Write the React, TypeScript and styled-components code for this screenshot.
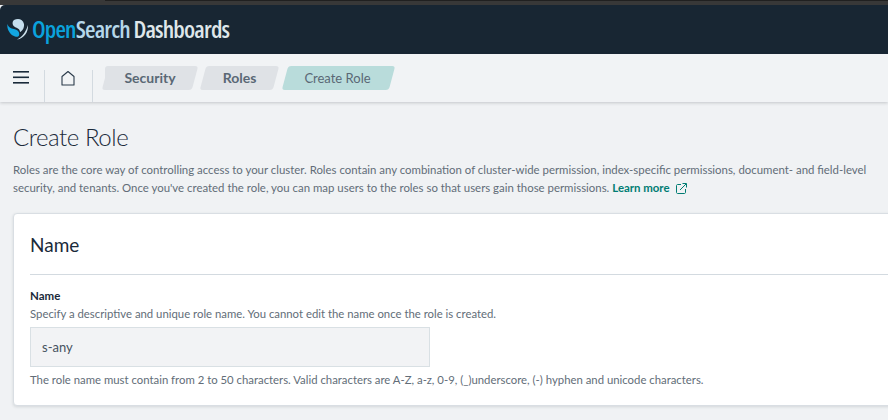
import React from "react";
import styled, { createGlobalStyle } from "styled-components";

const Global = createGlobalStyle`
  html, body { margin: 0; padding: 0; width: 888px; height: 420px; overflow: hidden; background: #f0f2f4; }
  * { box-sizing: border-box; }
  body { font-family: "Lato", "Noto Sans", sans-serif; }
`;

const Page = styled.div`
  width: 888px;
  height: 420px;
  overflow: hidden;
  display: flex;
  flex-direction: column;
  background: #f0f2f4;
`;
const TopStrip = styled.div`
  height: 5px;
  background: #383838;
  flex: none;
`;
const TopEdge = styled.div`
  height: 1px;
  margin-left: 105px;
  background: #202020;
`;
const Header = styled.header`
  height: 49px;
  flex: none;
  background: #182633;
  border-top-left-radius: 5px;
  display: flex;
  align-items: center;
  padding-left: 7px;
  gap: 3px;
`;
const LogoText = styled.div`
  font-family: "Open Sans", sans-serif;
  font-stretch: 75%;
  font-weight: 600;
  font-size: 24px;
  letter-spacing: -0.84px;
  white-space: nowrap;
  margin-top: -3px;
`;
const LogoPart = styled.span<{ $c: string }>`
  color: ${(p) => p.$c};
`;
const NavBar = styled.nav`
  height: 48px;
  flex: none;
  background: #f1f3f5;
  display: flex;
  align-items: stretch;
  box-shadow: 0 1px 3px rgba(40, 50, 60, 0.22);
  position: relative;
`;
const NavButton = styled.div<{ $w: number; $x: number }>`
  width: ${(p) => p.$w}px;
  display: flex;
  align-items: flex-start;
  justify-content: center;
  padding: 16px ${(p) => p.$x}px 0 0;
  flex: none;
`;
const Sep = styled.div`
  width: 1px;
  margin-top: 16px;
  background: #d3dae0;
  flex: none;
`;
const Crumbs = styled.div`
  display: flex;
  align-items: flex-start;
  padding: 12px 0 0 12px;
`;
const Crumb = styled.div<{ $w: number; $bg: string; $first?: boolean; $active?: boolean; $ml: number }>`
  position: relative;
  width: ${(p) => p.$w}px;
  height: 24px;
  margin-left: ${(p) => p.$ml}px;
  padding: 0 ${(p) => (p.$active ? 2 : 0)}px 1px 0;
  display: flex;
  align-items: center;
  justify-content: center;
  font-size: ${(p) => (p.$active ? 13 : 14)}px;
  font-weight: ${(p) => (p.$active ? 400 : 700)};
  color: #5a6875;
  z-index: 0;
  &::before {
    content: "";
    position: absolute;
    inset: 0;
    background: ${(p) => p.$bg};
    border-radius: 3px;
    transform: skewX(-15deg);
    z-index: -1;
  }
  &::after {
    content: "";
    display: ${(p) => (p.$first ? "block" : "none")};
    position: absolute;
    left: 0;
    top: 0;
    bottom: 0;
    width: 20px;
    background: ${(p) => p.$bg};
    border-radius: 3px 0 0 3px;
    z-index: -1;
  }
`;
const Content = styled.main`
  padding: 0 0 0 13px;
  flex: 1;
  display: flex;
  flex-direction: column;
  width: 1000px;
`;
const Title = styled.h1`
  margin: 19px 0 0;
  font-weight: 300;
  font-size: 24px;
  letter-spacing: -0.45px;
  line-height: 32px;
  color: #1a2a3a;
`;
const Desc = styled.p`
  margin: 8px 0 0;
  width: 870px;
  font-size: 11.42px;
  line-height: 18px;
  color: #626d78;
`;
const LearnMore = styled.span`
  color: #017d73;
  font-weight: 700;
`;
const ExternalIcon = styled.svg`
  margin-left: 6px;
  vertical-align: -2px;
`;
const Card = styled.section`
  margin-top: 16px;
  width: 1000px;
  height: 193px;
  background: #fff;
  border: 1px solid #d9dee3;
  border-radius: 4px;
  box-shadow: 0 1px 3px rgba(50, 60, 70, 0.15);
  padding: 0 16px;
`;
const CardTitle = styled.h2`
  margin: 0;
  height: 61px;
  display: flex;
  align-items: center;
  font-weight: 400;
  font-size: 19px;
  color: #1a2a3a;
  border-bottom: 1px solid #d3dae0;
`;
const Label = styled.div`
  margin-top: 13px;
  font-size: 11.5px;
  line-height: 16px;
  font-weight: 700;
  color: #1a2a3a;
`;
const Help = styled.div<{ $mt?: number }>`
  margin-top: ${(p) => p.$mt ?? 0}px;
  font-size: 11.35px;
  line-height: 17px;
  color: #626d78;
`;
const NameInput = styled.div`
  margin-top: 5px;
  width: 400px;
  height: 40px;
  background: #f2f3f5;
  border: 1px solid #d9e0e4;
  display: flex;
  align-items: center;
  padding-left: 11px;
  font-size: 13px;
  color: #46525e;
`;

export default function App() {
  return (
    <Page>
      <Global />
      <TopStrip>
        <TopEdge />
      </TopStrip>
      <Header>
        <svg width="22" height="24" viewBox="0 0 22 24">
          <path d="M7 2C11 0 16 1 17 6C17.500 10 15 13.500 13 14C13 11 10 10 8 9C5 7.500 5 3.500 7 2Z" fill="#c6dfee" />
          <path d="M0.500 6C1 9 4 10.500 7 11C11 12 13 14 12 17.500C11.500 19 9.500 19 8 18.500C3 17 -0.500 11 0.500 6Z" fill="#12a5e0" />
          <path d="M21 7C21.500 14 17 20.500 10 21.500C15 19 19 14 21 7Z" fill="#cfe3ee" />
        </svg>
        <LogoText>
          <LogoPart $c="#0aa2dc">Open</LogoPart>
          <LogoPart $c="#b5d7ea">Search</LogoPart>
          <LogoPart $c="#dfe6ea"> Dashboards</LogoPart>
        </LogoText>
      </Header>
      <NavBar>
        <NavButton $w={44} $x={2}>
          <svg width="16" height="14" viewBox="0 0 16 14" fill="#1a2a3a">
            <rect y="1" width="16" height="1.600" />
            <rect y="6.500" width="16" height="1.600" />
            <rect y="12" width="16" height="1.600" />
          </svg>
        </NavButton>
        <Sep />
        <NavButton $w={47} $x={1}>
          <svg width="16" height="16" viewBox="0 0 16 16" fill="none" stroke="#2a3a4a" strokeWidth="1.100">
            <path d="M2 15V6.500L8 1.500L14 6.500V15Z" strokeLinejoin="round" />
          </svg>
        </NavButton>
        <Sep />
        <Crumbs>
          <Crumb $first $w={90} $ml={0} $bg="#dfe2e6">Security</Crumb>
          <Crumb $w={73} $ml={8} $bg="#dfe2e6">Roles</Crumb>
          <Crumb $active $w={107} $ml={9} $bg="#b9dcdb">Create Role</Crumb>
        </Crumbs>
      </NavBar>
      <Content>
        <Title>Create Role</Title>
        <Desc>
          Roles are the core way of controlling access to your cluster. Roles contain any combination of cluster-wide permission, index-specific permissions, document- and field-level security, and tenants. Once you've created the role, you can map users to the roles so that users gain those permissions.{" "}
          <LearnMore>Learn more</LearnMore>
          <ExternalIcon width="11" height="11" viewBox="0 0 11 11" fill="none" stroke="#017d73" strokeWidth="1">
            <path d="M5 1.500H1.500C1 1.500 0.500 2 0.500 2.500V9.500C0.500 10 1 10.500 1.500 10.500H8.500C9 10.500 9.500 10 9.500 9.500V6" />
            <path d="M4 7L10 1M6.500 0.500H10.500V4.500" />
          </ExternalIcon>
        </Desc>
        <Card>
          <CardTitle>Name</CardTitle>
          <Label>Name</Label>
          <Help $mt={1}>Specify a descriptive and unique role name. You cannot edit the name once the role is created.</Help>
          <NameInput>s-any</NameInput>
          <Help $mt={4}>The role name must contain from 2 to 50 characters. Valid characters are A-Z, a-z, 0-9, (_)underscore, (-) hyphen and unicode characters.</Help>
        </Card>
      </Content>
    </Page>
  );
}
